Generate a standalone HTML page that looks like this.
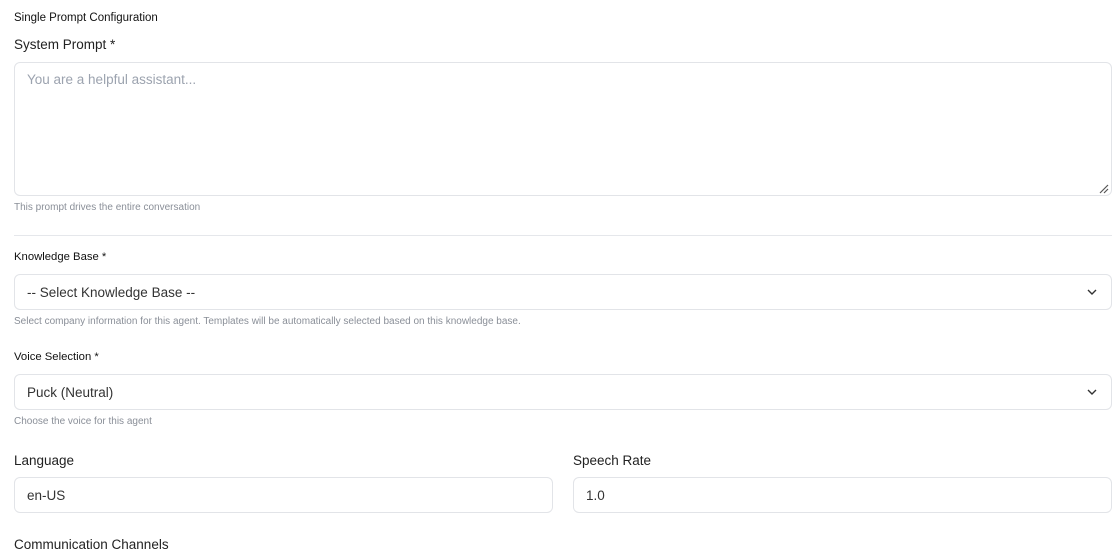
<!DOCTYPE html>
<html><head><style>
*{box-sizing:border-box;margin:0;padding:0}
body{width:1119px;height:541px;overflow:hidden;background:#fff;font-family:"Liberation Sans",sans-serif;color:#1f2937;position:relative}
.a{position:absolute;white-space:nowrap}
.box{position:absolute;border:1px solid #e2e4e8;border-radius:6px;background:#fff}
.sm{font-size:11px;color:#111}
.lb{font-size:13.5px;color:#222}
.hint{font-size:10px;color:#8a8f98}
.val{font-size:13.5px;color:#333}
</style></head><body>
<div class="a sm" style="left:14px;top:12px;font-size:11.5px">Single Prompt Configuration</div>
<div class="a lb" style="left:14px;top:37px">System Prompt *</div>
<div class="box" style="left:14px;top:62px;width:1098px;height:134px"></div>
<div class="a val" style="left:27px;top:72px;color:#9ca3af">You are a helpful assistant...</div>
<svg class="a" style="left:1099px;top:184px" width="10" height="10"><path d="M1 9L9 1M5 9L9 5" stroke="#555" stroke-width="1.2"/></svg>
<div class="a hint" style="left:14px;top:202px">This prompt drives the entire conversation</div>
<div class="a" style="left:14px;top:235px;width:1098px;height:1px;background:#e5e7eb"></div>
<div class="a sm" style="left:14px;top:251px;font-size:11.3px">Knowledge Base *</div>
<div class="box" style="left:14px;top:274px;width:1098px;height:36px"></div>
<div class="a val" style="left:27px;top:285px">-- Select Knowledge Base --</div>
<svg class="a" style="left:1087px;top:288px" width="10" height="8"><path d="M1 2L5 6L9 2" stroke="#333" stroke-width="1.4" fill="none"/></svg>
<div class="a hint" style="left:14px;top:316px">Select company information for this agent. Templates will be automatically selected based on this knowledge base.</div>
<div class="a sm" style="left:14px;top:351px;font-size:11.3px">Voice Selection *</div>
<div class="box" style="left:14px;top:374px;width:1098px;height:36px"></div>
<div class="a val" style="left:27px;top:385px">Puck (Neutral)</div>
<svg class="a" style="left:1087px;top:388px" width="10" height="8"><path d="M1 2L5 6L9 2" stroke="#333" stroke-width="1.4" fill="none"/></svg>
<div class="a hint" style="left:14px;top:416px">Choose the voice for this agent</div>
<div class="a lb" style="left:14px;top:453px">Language</div>
<div class="a lb" style="left:573px;top:453px">Speech Rate</div>
<div class="box" style="left:14px;top:477px;width:539px;height:36px"></div>
<div class="a val" style="left:27px;top:488px">en-US</div>
<div class="box" style="left:573px;top:477px;width:539px;height:36px"></div>
<div class="a val" style="left:586px;top:488px">1.0</div>
<div class="a lb" style="left:14px;top:537px">Communication Channels</div>
</body></html>
